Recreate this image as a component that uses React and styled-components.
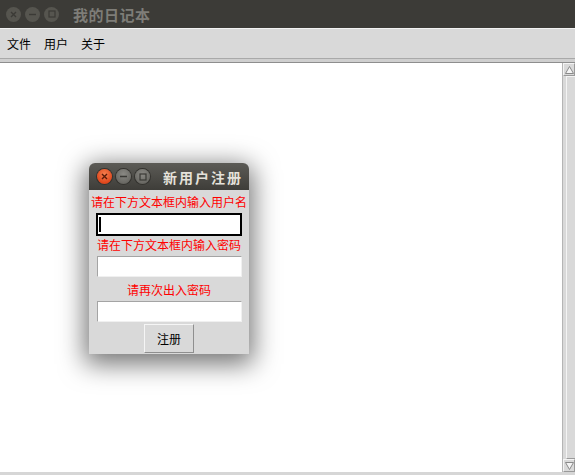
import styled, { createGlobalStyle } from "styled-components";

const GlobalStyle = createGlobalStyle`
  html, body {
    margin: 0;
    padding: 0;
    background: #ffffff;
  }
  body {
    font-family: "Noto Sans CJK SC", "DejaVu Sans", sans-serif;
  }
`;

const StyledWindow = styled.div`
  position: relative;
  display: flex;
  flex-direction: column;
  width: 575px;
  height: 475px;
  overflow: hidden;
  background: #ffffff;
`;

const StyledTitleBar = styled.div`
  display: flex;
  align-items: center;
  height: 28px;
  padding-left: 6px;
  background: #3c3b37;
  flex-shrink: 0;
`;

const StyledWinButtons = styled.div`
  display: flex;
  gap: 4px;
  align-items: center;
`;

const StyledWinButton = styled.div`
  display: flex;
  align-items: center;
  justify-content: center;
  width: 15px;
  height: 15px;
  border-radius: 50%;
  background: ${(p) => (p.$close ? "radial-gradient(circle at 50% 35%, #f5804f, #e0471c 70%, #b8391a)" : p.$dim ? "#56554f" : "radial-gradient(circle at 50% 35%, #8a8984, #6a6964 70%, #4e4d49)")};
  box-shadow: ${(p) => (p.$dim ? "none" : "0 0 0 1px #33322e")};
`;

const StyledTitle = styled.span`
  margin-left: ${(p) => p.$offset}px;
  font-size: ${(p) => p.$size}px;
  font-weight: bold;
  letter-spacing: ${(p) => p.$spacing}px;
  color: ${(p) => p.$color};
  white-space: nowrap;
`;

const StyledMenuBar = styled.div`
  display: flex;
  align-items: center;
  height: 29px;
  padding-left: 7px;
  gap: 13px;
  background: #d9d9d9;
  border-top: 1px solid #f2f2f2;
  border-bottom: 1px solid #a9a9a9;
  flex-shrink: 0;
`;

const StyledMenuItem = styled.span`
  font-size: 12px;
  color: #000000;
`;

const StyledSeparator = styled.div`
  height: 3px;
  background: #cfcfcf;
  border-bottom: 1px solid #8e8e8e;
  flex-shrink: 0;
`;

const StyledContent = styled.div`
  display: flex;
  flex: 1;
  min-height: 0;
  border-bottom: 3px solid #d6d6d6;
`;

const StyledTextArea = styled.div`
  flex: 1;
  background: #ffffff;
  border-right: 1px solid #b5b5b5;
`;

const StyledScrollbar = styled.div`
  display: flex;
  flex-direction: column;
  width: 12px;
  background: #d9d9d9;
`;

const StyledArrow = styled.div`
  display: flex;
  align-items: center;
  justify-content: center;
  height: 13px;
  background: #d9d9d9;
  border-top: 1px solid #f4f4f4;
  border-left: 1px solid #f4f4f4;
  border-bottom: 1px solid #9a9a9a;
  border-right: 1px solid #9a9a9a;
  box-sizing: border-box;
`;

const StyledTrough = styled.div`
  flex: 1;
  margin: 0 0 0 3px;
  background: #d9d9d9;
  border-left: 1px solid #f4f4f4;
  border-top: 1px solid #f4f4f4;
  border-bottom: 1px solid #9a9a9a;
`;

const StyledDialog = styled.div`
  position: absolute;
  left: 89px;
  top: 163px;
  width: 160px;
  height: 191px;
  display: flex;
  flex-direction: column;
  border-radius: 6px 6px 0 0;
  overflow: hidden;
  background: #d9d9d9;
  box-shadow: 0 6px 26px 4px rgba(0, 0, 0, 0.55);
`;

const StyledDialogTitleBar = styled.div`
  display: flex;
  align-items: center;
  height: 27px;
  padding-left: 8px;
  background: linear-gradient(#5c5b56, #3e3d39);
  flex-shrink: 0;
`;

const StyledDialogBody = styled.div`
  display: flex;
  flex-direction: column;
  align-items: center;
  padding-top: 3px;
`;

const StyledLabel = styled.div`
  font-size: 12px;
  line-height: 17px;
  color: #ff0000;
  white-space: nowrap;
  margin-top: ${(p) => p.$top || 0}px;
`;

const StyledInput = styled.div`
  position: relative;
  box-sizing: border-box;
  width: ${(p) => (p.$focused ? 146 : 145)}px;
  height: ${(p) => (p.$focused ? 23 : 21)}px;
  margin-top: ${(p) => p.$top || 0}px;
  background: #ffffff;
  border: ${(p) => (p.$focused ? "2px solid #000000" : "1px solid #a4a4a4")};
  border-bottom-color: ${(p) => (p.$focused ? "#000000" : "#f0f0f0")};
  border-right-color: ${(p) => (p.$focused ? "#000000" : "#f0f0f0")};
`;

const StyledCaret = styled.div`
  position: absolute;
  left: 1px;
  top: 2px;
  width: 2px;
  height: 15px;
  background: #000000;
`;

const StyledButton = styled.button`
  width: 50px;
  height: 29px;
  margin-top: 2px;
  padding: 0;
  font-family: "Noto Sans CJK SC", "DejaVu Sans", sans-serif;
  font-size: 12px;
  color: #000000;
  background: #d9d9d9;
  border: 1px solid;
  border-color: #f5f5f5 #8f8f8f #8f8f8f #f5f5f5;
`;

function WinSymbol({ type, color }) {
  if (type === "close") {
    return (
      <svg width="7" height="7" viewBox="0 0 7 7">
        <path d="M1 1 L6 6 M6 1 L1 6" stroke={color} strokeWidth="1.4" />
      </svg>
    );
  }
  if (type === "min") {
    return (
      <svg width="9" height="9" viewBox="0 0 9 9">
        <path d="M1 4.5 H8" stroke={color} strokeWidth="1.4" />
      </svg>
    );
  }
  return (
    <svg width="8" height="8" viewBox="0 0 8 8">
      <rect x="1" y="1" width="6" height="6" fill="none" stroke={color} strokeWidth="1.2" />
    </svg>
  );
}

function ArrowGlyph({ down }) {
  return (
    <svg width="9" height="8" viewBox="0 0 9 8">
      <polygon
        points={down ? "0.5,0.5 8.5,0.5 4.5,7.5" : "4.5,0.5 8.5,7.5 0.5,7.5"}
        fill="#f4f4f4"
        stroke="#8a8a8a"
        strokeWidth="1"
      />
    </svg>
  );
}

function Dialog() {
  return (
    <StyledDialog>
      <StyledDialogTitleBar>
        <StyledWinButtons>
          <StyledWinButton $close>
            <WinSymbol type="close" color="#5a1a08" />
          </StyledWinButton>
          <StyledWinButton>
            <WinSymbol type="min" color="#3a3935" />
          </StyledWinButton>
          <StyledWinButton>
            <WinSymbol type="max" color="#3a3935" />
          </StyledWinButton>
        </StyledWinButtons>
        <StyledTitle $offset={13} $size={14} $spacing={2} $color="#e4e1da">
          新用户注册
        </StyledTitle>
      </StyledDialogTitleBar>
      <StyledDialogBody>
        <StyledLabel>请在下方文本框内输入用户名</StyledLabel>
        <StyledInput $focused $top={3}>
          <StyledCaret />
        </StyledInput>
        <StyledLabel>请在下方文本框内输入密码</StyledLabel>
        <StyledInput $top={3} />
        <StyledLabel $top={4}>请再次出入密码</StyledLabel>
        <StyledInput $top={3} />
        <StyledButton>注册</StyledButton>
      </StyledDialogBody>
    </StyledDialog>
  );
}

export default function App() {
  return (
    <>
      <GlobalStyle />
      <StyledWindow>
        <StyledTitleBar>
          <StyledWinButtons>
            <StyledWinButton $dim>
              <WinSymbol type="close" color="#3b3a36" />
            </StyledWinButton>
            <StyledWinButton $dim>
              <WinSymbol type="min" color="#3b3a36" />
            </StyledWinButton>
            <StyledWinButton $dim>
              <WinSymbol type="max" color="#3b3a36" />
            </StyledWinButton>
          </StyledWinButtons>
          <StyledTitle $offset={14} $size={15} $spacing={0.5} $color="#7e7d78">
            我的日记本
          </StyledTitle>
        </StyledTitleBar>
        <StyledMenuBar>
          <StyledMenuItem>文件</StyledMenuItem>
          <StyledMenuItem>用户</StyledMenuItem>
          <StyledMenuItem>关于</StyledMenuItem>
        </StyledMenuBar>
        <StyledSeparator />
        <StyledContent>
          <StyledTextArea />
          <StyledScrollbar>
            <StyledArrow>
              <ArrowGlyph />
            </StyledArrow>
            <StyledTrough />
            <StyledArrow>
              <ArrowGlyph down />
            </StyledArrow>
          </StyledScrollbar>
        </StyledContent>
        <Dialog />
      </StyledWindow>
    </>
  );
}
